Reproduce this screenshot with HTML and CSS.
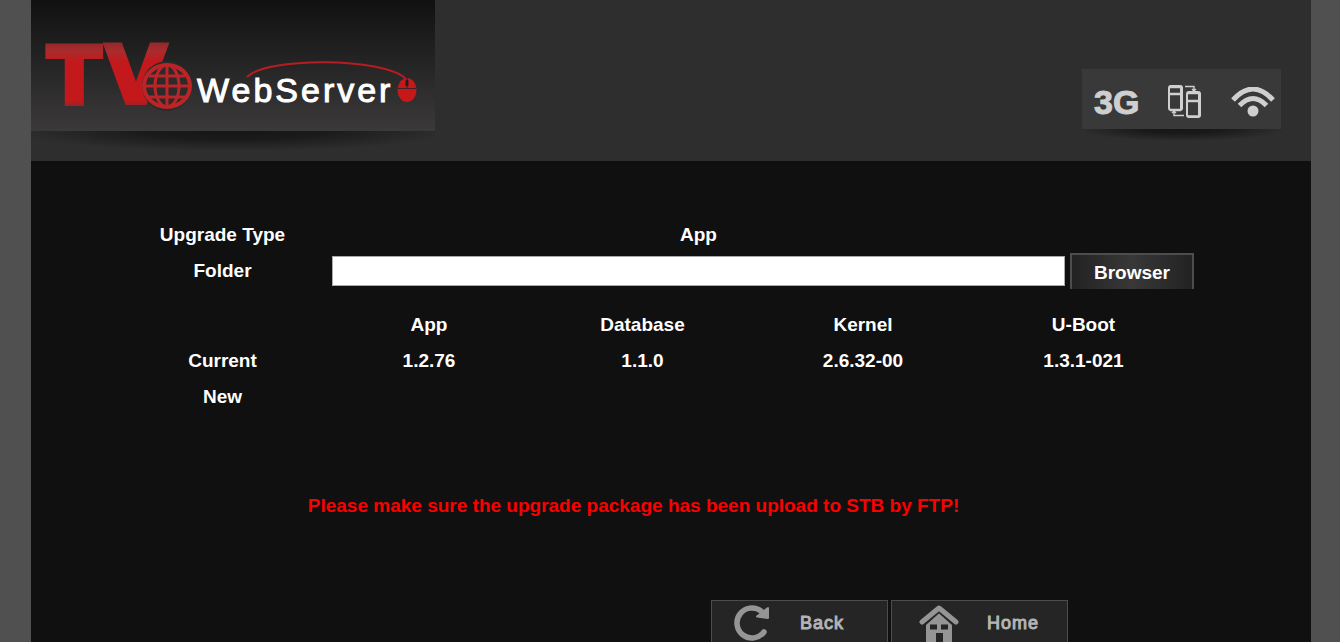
FILE: index.html
```html
<!DOCTYPE html>
<html lang="en">
<head>
<meta charset="utf-8">
<title>TV WebServer</title>
<link rel="stylesheet" href="styles.css">
</head>
<body>
<div class="page">
  <header class="header">
    <div class="brand">
      <svg class="logo" viewBox="0 0 404 131" role="img" aria-label="TV WebServer">
        <defs>
          <linearGradient id="red" gradientUnits="userSpaceOnUse" x1="0" y1="43" x2="0" y2="106">
            <stop offset="0" stop-color="#94282b"/>
            <stop offset=".12" stop-color="#a82c2e"/>
            <stop offset=".3" stop-color="#c2191c"/>
            <stop offset=".9" stop-color="#c4181b"/>
            <stop offset="1" stop-color="#9c2225"/>
          </linearGradient>
        </defs>
        <text class="tv" x="74" y="103">V</text>
        <text class="tv" x="16" y="104">T</text>
        <circle cx="136" cy="86" r="25" fill="#2c2a2b"/>
        <g fill="none" stroke="#bb2528" stroke-width="3">
          <ellipse cx="136" cy="86" rx="23" ry="21" stroke-width="4"/>
          <ellipse cx="136" cy="86" rx="12" ry="21"/>
          <path d="M136 65v42M113 86h46M118 76h36M118 97h36"/>
        </g>
        <text class="wordmark" x="166" y="102">WebServer</text>
        <path d="M216 77C235 57 352 57 375 79" fill="none" stroke="#b51d20" stroke-width="2"/>
        <ellipse cx="376" cy="90" rx="9.500" ry="12" fill="#c4181b"/>
        <path d="M367 88.500h18M376 78v10" stroke="#402022" stroke-width="1.200"/>
        <rect x="374.500" y="80" width="3" height="6" rx="1" fill="#241c1d"/>
      </svg>
      <div class="shadow"></div>
    </div>
    <div class="status">
      <div class="status-icons">
        <span class="three-g">3G</span>
        <svg class="devices" viewBox="0 0 34 34" fill="none" stroke="#cfcfcf" aria-hidden="true">
          <rect x="1" y="1" width="13" height="24" rx="2" stroke-width="2"/>
          <path d="M1 2h13M1 9h13M2 25h11" stroke-width="2.400"/>
          <path d="M13.500 2v22" stroke-width="3"/>
          <rect x="19" y="7" width="13" height="25" rx="2" stroke-width="2"/>
          <path d="M19 8h13M19 16h13M20 31.500h11" stroke-width="2.400"/>
          <path d="M31.500 8v23" stroke-width="3"/>
          <path d="M17 1.500h9v4M24 4l2 2 2-2M16 30.500H6v-4M4 28l2-2 2 2" stroke-width="1.400"/>
        </svg>
        <svg class="wifi" viewBox="0 0 44 30" fill="none" stroke="#cfcfcf" stroke-width="5" aria-hidden="true">
          <path d="M2 13Q22-9 42 13M8.500 18.500Q22 4.500 35.500 18.500"/>
          <circle cx="22" cy="24" r="5.500" fill="#cfcfcf" stroke="none"/>
        </svg>
      </div>
      <div class="shadow"></div>
    </div>
  </header>
  <main class="main">
    <form class="upgrade">
      <span class="caption">Upgrade Type</span>
      <span class="type">App</span>
      <label class="caption folder-label" for="folder">Folder</label>
      <input class="folder" id="folder" type="text">
      <button class="browse" type="button">Browser</button>
    </form>
    <table class="versions">
      <thead>
        <tr><td class="c-label"></td><th class="c-app" scope="col">App</th><th class="c-db" scope="col">Database</th><th class="c-kernel" scope="col">Kernel</th><th scope="col">U-Boot</th></tr>
      </thead>
      <tbody>
        <tr><th scope="row">Current</th><td>1.2.76</td><td>1.1.0</td><td>2.6.32-00</td><td>1.3.1-021</td></tr>
        <tr><th scope="row">New</th><td></td><td></td><td></td><td></td></tr>
      </tbody>
    </table>
    <p class="warning">Please make sure the upgrade package has been upload to STB by FTP!</p>
    <nav class="actions">
      <button class="action" type="button">
        <svg class="icon" viewBox="0 0 40 40" aria-hidden="true">
          <path d="M29 8A15 15 0 1 0 32 29" fill="none" stroke="#959595" stroke-width="5.500" stroke-linecap="round"/>
          <path d="M36 5v10l-11-1.500z" fill="#959595" stroke="#959595" stroke-width="2" stroke-linejoin="round"/>
        </svg>
        <span class="action-text">Back</span>
      </button>
      <button class="action home" type="button">
        <svg class="icon" viewBox="0 0 40 40" aria-hidden="true">
          <path d="M7 21L20 9.500 33 21v18H24v-9h-7v9H7z" fill="#959595"/>
          <path d="M5.500 22L20 9 34.500 22" fill="none" stroke="#252525" stroke-width="2"/>
          <path d="M3 19L20 5l17 14" fill="none" stroke="#959595" stroke-width="5" stroke-linecap="round" stroke-linejoin="round"/>
          <path d="M11 21.500h7v5h-7zM22 21.500h7v5h-7z" fill="#252525"/>
        </svg>
        <span class="action-text">Home</span>
      </button>
    </nav>
  </main>
</div>
</body>
</html>
```
FILE: styles.css
```css
* { box-sizing: border-box; }

body {
  margin: 0;
  background: #505050;
  color: #fff;
  font: bold 19px/36px "Liberation Sans", Arial, sans-serif;
}

.page {
  height: 100vh;
  overflow: hidden;
  margin: 0 29px 0 31px;
  background: #101010;
}

.header {
  display: flex;
  justify-content: space-between;
  align-items: flex-end;
  padding-right: 30px;
  background: #2e2e2e;
}

.brand { width: 404px; }

.logo {
  display: block;
  width: 100%;
  background: linear-gradient(#111, #3b393a);
}

.tv {
  font: bold 80px "DejaVu Sans", sans-serif;
  fill: url(#red);
  stroke: url(#red);
  stroke-width: 4px;
}

.wordmark {
  font: 34px "Liberation Sans", Arial, sans-serif;
  letter-spacing: 3px;
  fill: #fff;
  stroke: #fff;
  stroke-width: 1px;
}

.shadow {
  height: 30px;
  background: radial-gradient(54% 20px at 50% 0, #161616, #1a1a1a 40%, transparent);
}

.status { width: 199px; }

.status .shadow {
  height: 32px;
  background: radial-gradient(52% 12px at 50% 0, #161616, #1a1a1a 40%, transparent);
}

.status-icons {
  display: flex;
  align-items: center;
  justify-content: space-between;
  height: 60px;
  padding: 6px 6px 0 12px;
  background: #393939;
}

.three-g {
  color: #cfcfcf;
  font-size: 34px;
  -webkit-text-stroke: 1px #cfcfcf;
}

.devices { width: 34px; height: 34px; }
.wifi { width: 44px; height: 30px; }

.main { padding: 56px 111px 0 82px; }

.upgrade {
  display: grid;
  grid-template-columns: 219px 1fr 124px;
  grid-auto-rows: 36px;
  margin-right: 6px;
  text-align: center;
}

.type {
  grid-column: 2;
  margin-right: 5px;
}

.folder-label { grid-column: 1; }

.folder {
  align-self: center;
  height: 30px;
  margin-right: 5px;
  padding: 0 6px;
  border: 1px solid #aaa;
  background: #fff;
  font: 19px "Liberation Sans", Arial, sans-serif;
}

.browse {
  height: 36px;
  padding: 0;
  border: 2px solid #4d4d4d;
  border-bottom: 0;
  background: linear-gradient(90deg, #222, #383838 50%, #222);
  color: #fff;
  font: inherit;
}

.versions {
  width: 100%;
  margin-top: 18px;
  border-collapse: collapse;
  table-layout: fixed;
  text-align: center;
}

.versions th, .versions td { height: 36px; padding: 0; }
.c-label { width: 219px; }
.c-app { width: 194px; }
.c-db { width: 233px; }
.c-kernel { width: 208px; }

.warning {
  margin: 73px 46px 0 0;
  color: #fa0000;
  text-align: center;
}

.actions {
  display: flex;
  justify-content: flex-end;
  gap: 3px;
  margin: 76px 132px 0 0;
}

.action {
  display: flex;
  align-items: center;
  gap: 28px;
  width: 177px;
  height: 46px;
  padding: 0 0 0 20px;
  border: 1px solid #4c4c4c;
  background: #252525;
  color: #b4b4b4;
  font: 18px "Liberation Sans", Arial, sans-serif;
}

.home { padding-left: 27px; }
.icon { width: 40px; height: 40px; }

.action-text {
  letter-spacing: 1px;
  -webkit-text-stroke: 1px #b4b4b4;
}
```
